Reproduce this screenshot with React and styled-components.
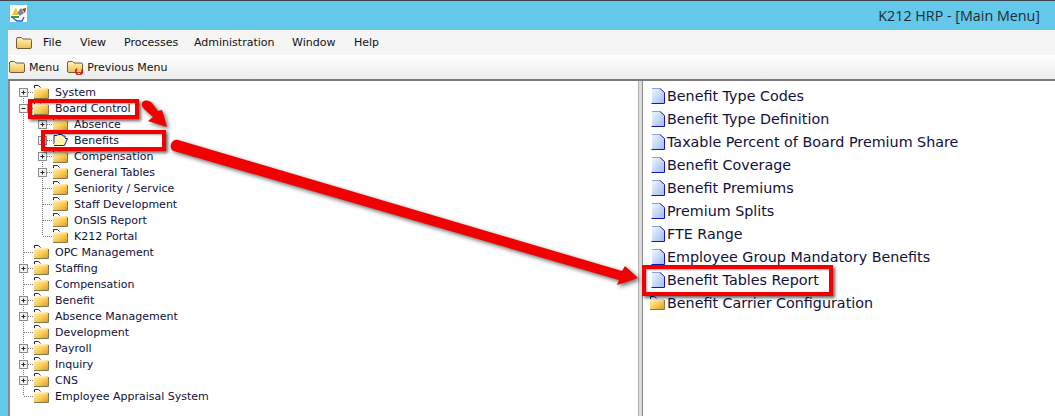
import styled, { createGlobalStyle } from "styled-components";

const GlobalStyle = createGlobalStyle`
  html, body {
    margin: 0;
    padding: 0;
    background: #fff;
    overflow: hidden;
  }
`;

const tree = [
  { label: "System", guides: [], icon: "plus", first: true },
  { label: "Board Control", guides: [], icon: "minus" },
  { label: "Absence", guides: [true], icon: "plus", first: true },
  { label: "Benefits", guides: [true], icon: "plus", open: true },
  { label: "Compensation", guides: [true], icon: "plus" },
  { label: "General Tables", guides: [true], icon: "plus" },
  { label: "Seniority / Service", guides: [true] },
  { label: "Staff Development", guides: [true] },
  { label: "OnSIS Report", guides: [true] },
  { label: "K212 Portal", guides: [true], last: true },
  { label: "OPC Management", guides: [] },
  { label: "Staffing", guides: [], icon: "plus" },
  { label: "Compensation", guides: [] },
  { label: "Benefit", guides: [], icon: "plus" },
  { label: "Absence Management", guides: [], icon: "plus" },
  { label: "Development", guides: [] },
  { label: "Payroll", guides: [], icon: "plus" },
  { label: "Inquiry", guides: [], icon: "plus" },
  { label: "CNS", guides: [], icon: "plus" },
  { label: "Employee Appraisal System", guides: [], last: true },
];

const reports = [
  "Benefit Type Codes",
  "Benefit Type Definition",
  "Taxable Percent of Board Premium Share",
  "Benefit Coverage",
  "Benefit Premiums",
  "Premium Splits",
  "FTE Range",
  "Employee Group Mandatory Benefits",
  "Benefit Tables Report",
];

const Gradients = () => (
  <svg width="0" height="0" style={{ position: "absolute" }}>
    <defs>
      <linearGradient id="folderFill" x1="0" y1="0" x2="1" y2="1">
        <stop offset="0" stopColor="#fff3b8" />
        <stop offset="0.6" stopColor="#f8c850" />
        <stop offset="1" stopColor="#d89a28" />
      </linearGradient>
      <linearGradient id="pageFill" x1="0" y1="0" x2="1" y2="1">
        <stop offset="0" stopColor="#f4f8ff" />
        <stop offset="1" stopColor="#9dbdf0" />
      </linearGradient>
      <linearGradient id="menuFolder" x1="0" y1="0" x2="0" y2="1">
        <stop offset="0" stopColor="#fff4b8" />
        <stop offset="1" stopColor="#edbf55" />
      </linearGradient>
    </defs>
  </svg>
);

const TreeFolder = () => (
  <svg width="16" height="16" viewBox="0 0 16 16">
    <path d="M1.5 4.5V1.5H5.5L7.5 3.5" fill="none" stroke="#1a1a9a" />
    <path d="M1 4H15V14H1Z" fill="url(#folderFill)" />
    <path d="M1 14.5H15.5V5" fill="none" stroke="#8a7a50" />
    <path d="M2 5H14" stroke="#fff8d0" />
  </svg>
);

const OpenFolder = () => (
  <svg width="16" height="16" viewBox="0 0 16 16">
    <path d="M2 12V3.5H5L6 2.5H10L11 4H13V6" fill="#fff6c0" stroke="#1a1a9a" />
    <path d="M1.5 13.5L4.5 6.5H15.5L12.5 13.5Z" fill="#fff3a4" />
    <path d="M2 13.5H12.5L15.5 6.5H13" fill="none" stroke="#1a1a9a" />
  </svg>
);

const PageIcon = () => (
  <svg width="16" height="16" viewBox="-2 0 16 16">
    <path d="M1 0.5H9.5L13 4V15H1Z" fill="url(#pageFill)" />
    <path d="M9 0.5L13.5 4.5V15.5H0.5" fill="none" stroke="#1616b8" />
    <path d="M1 0.5H9" stroke="#8aa0e0" />
  </svg>
);

const MenuFolder = ({ back }) => (
  <svg width="16" height="16" viewBox="0 0 16 16">
    <path
      d="M0.5 4Q0.5 2.5 2 2.5H5.5L7 4H14Q15.5 4 15.5 5.5V12Q15.5 13.5 14 13.5H2Q0.5 13.5 0.5 12Z"
      fill="url(#menuFolder)"
      stroke="#6e5f36"
    />
    {back && (
      <path d="M14.5 10.5A3.2 3.2 0 1 1 10 10" fill="none" stroke="#e01818" strokeWidth="1.7" />
    )}
  </svg>
);

const AppIcon = () => (
  <svg width="17" height="17" viewBox="0 0 17 17">
    <rect width="17" height="17" fill="#fff" />
    <path d="M2 10L6 2L8 10Z" fill="#e8c820" />
    <path d="M7 8L11 3L14 8L10 11Z" fill="#7a8a98" />
    <path d="M12 4L16 3L15 8Z" fill="#d81818" />
    <path d="M1 11H9V13H1Z" fill="#3a9a40" />
    <path d="M3 13L7 16H12L14 12" fill="none" stroke="#2a5ad8" strokeWidth="1.4" />
  </svg>
);

// one indent cell of the tree: dotted guide, optional tee and +/- box
const TreeCell = ({ guide, tee, first, last, icon }) => (
  <svg width="19" height="16" viewBox="0 0 19 16">
    {guide && <path d="M9.5 0V16" stroke="#777" strokeDasharray="1 1" />}
    {tee && (
      <>
        <path d={`M9.5 ${first ? 8 : 0}V${last ? 8 : 16}`} stroke="#777" strokeDasharray="1 1" />
        <path d="M10 8.5H20" stroke="#777" strokeDasharray="1 1" />
      </>
    )}
    {icon && (
      <>
        <rect x="5.5" y="4.5" width="8" height="8" fill="#f2f2f2" stroke="#8c8c8c" />
        <path d="M7.5 8.5H11.5" stroke="#222" />
        {icon === "plus" && <path d="M9.5 6.5V10.5" stroke="#222" />}
      </>
    )}
  </svg>
);

const App = () => (
  <>
    <GlobalStyle />
    <Gradients />
    <Frame>
      <TitleBar>
        <AppIcon />
        <Title>K212 HRP - [Main Menu]</Title>
      </TitleBar>
      <Chrome>
        <MenuBar>
          <MenuFolder />
          <MenuItem $width={37}>File</MenuItem>
          <MenuItem $width={44}>View</MenuItem>
          <MenuItem $width={70}>Processes</MenuItem>
          <MenuItem $width={98}>Administration</MenuItem>
          <MenuItem $width={62}>Window</MenuItem>
          <MenuItem>Help</MenuItem>
        </MenuBar>
        <ToolBar>
          <ToolButton>
            <MenuFolder />
            Menu
          </ToolButton>
          <ToolButton>
            <MenuFolder back />
            Previous Menu
          </ToolButton>
        </ToolBar>
        <Panes>
          <TreePane>
            {tree.map((row) => (
              <TreeRow key={row.label + row.guides.length}>
                {row.guides.map((g, i) => (
                  <TreeCell key={i} guide={g} />
                ))}
                <TreeCell tee first={row.first && !row.guides.length} last={row.last} icon={row.icon} />
                {row.open ? <OpenFolder /> : <TreeFolder />}
                <TreeLabel>{row.label}</TreeLabel>
              </TreeRow>
            ))}
          </TreePane>
          <Splitter />
          <ListPane>
            {reports.map((name) => (
              <ListRow key={name}>
                <PageIcon />
                <ListLabel>{name}</ListLabel>
              </ListRow>
            ))}
            <ListRow>
              <TreeFolder />
              <ListLabel>Benefit Carrier Configuration</ListLabel>
            </ListRow>
          </ListPane>
        </Panes>
      </Chrome>

      <Callout $left={28} $top={98} $width={111} $height={20} />
      <Callout $left={41} $top={129} $width={125} $height={21} />
      <Callout $left={642} $top={264} $width={191} $height={31} />
      <Arrows width="1055" height="416" viewBox="0 0 1055 416">
        <path
          d="M144 100C147 99 150 100 152 102L158 110L162 109L167 126L148 120L153 116L144 108C141 105 141 101 144 100Z"
          fill="#f00000"
        />
        <path
          d="M178 139L622 270L625 265L638 277L617 284L619 279L174 150C171 149 170 146 171 143C172 140 175 138 178 139Z"
          fill="#f00000"
        />
      </Arrows>
    </Frame>
  </>
);

const Frame = styled.div`
  position: relative;
  display: flex;
  flex-direction: column;
  width: 1055px;
  height: 416px;
  overflow: hidden;
  background: #63c8e9;
  border-top: 1px solid #3c4246;
  box-sizing: border-box;
`;

const TitleBar = styled.div`
  display: flex;
  align-items: center;
  justify-content: space-between;
  height: 29px;
  flex-shrink: 0;
  padding: 0 15px 0 10px;
  svg {
    margin-top: -4px;
  }
`;

const Title = styled.div`
  font: 14.3px "Open Sans", sans-serif;
  color: #1c2c34;
`;

const Chrome = styled.div`
  display: flex;
  flex-direction: column;
  flex: 1;
  min-height: 0;
  margin-left: 8px;
  background: #f5f5f5;
`;

const MenuBar = styled.div`
  display: flex;
  align-items: center;
  height: 25px;
  flex-shrink: 0;
  padding-left: 8px;
  font: 11px "DejaVu Sans", sans-serif;
  color: #111;
  svg {
    margin-right: 11px;
  }
`;

const MenuItem = styled.div`
  width: ${(p) => (p.$width ? `${p.$width}px` : "auto")};
  flex-shrink: 0;
`;

const ToolBar = styled.div`
  display: flex;
  align-items: center;
  gap: 8px;
  height: 24px;
  flex-shrink: 0;
  padding-left: 1px;
  background: linear-gradient(#ffffff, #ececec);
  border-bottom: 2px solid #7a7a7a;
  font: 11px "DejaVu Sans", sans-serif;
  color: #111;
`;

const ToolButton = styled.div`
  display: flex;
  align-items: center;
  gap: 4px;
`;

const Panes = styled.div`
  display: flex;
  flex: 1;
  min-height: 0;
  background: #fff;
`;

const TreePane = styled.div`
  width: 630px;
  flex-shrink: 0;
  box-sizing: border-box;
  padding: 3px 0 0 4px;
  border-left: 2px solid #8c8c8c;
  background: #fff;
`;

const TreeRow = styled.div`
  display: flex;
  align-items: center;
  height: 16px;
`;

const TreeLabel = styled.span`
  margin-left: 6px;
  font: 11px "DejaVu Sans", sans-serif;
  color: #10103a;
  white-space: nowrap;
`;

const Splitter = styled.div`
  width: 3px;
  flex-shrink: 0;
  background: #dcdcdc;
  border-left: 1px solid #b0b0b0;
  border-right: 1px solid #8c8c8c;
`;

const ListPane = styled.div`
  flex: 1;
  padding: 3px 0 0 6px;
  background: #fff;
`;

const ListRow = styled.div`
  display: flex;
  align-items: center;
  height: 23px;
`;

const ListLabel = styled.span`
  margin-left: 2px;
  font: 14.3px "DejaVu Sans", sans-serif;
  color: #10103a;
  white-space: nowrap;
`;

const Callout = styled.div`
  position: absolute;
  left: ${(p) => p.$left}px;
  top: ${(p) => p.$top}px;
  width: ${(p) => p.$width}px;
  height: ${(p) => p.$height}px;
  box-sizing: border-box;
  border: 4px solid #f00000;
  box-shadow: 2px 2px 3px rgba(0, 0, 0, 0.6), inset 1px 1px 2px rgba(0, 0, 0, 0.35);
`;

const Arrows = styled.svg`
  position: absolute;
  left: 0;
  top: 0;
  pointer-events: none;
  filter: drop-shadow(2px 2px 2px rgba(0, 0, 0, 0.6));
`;

export default App;
